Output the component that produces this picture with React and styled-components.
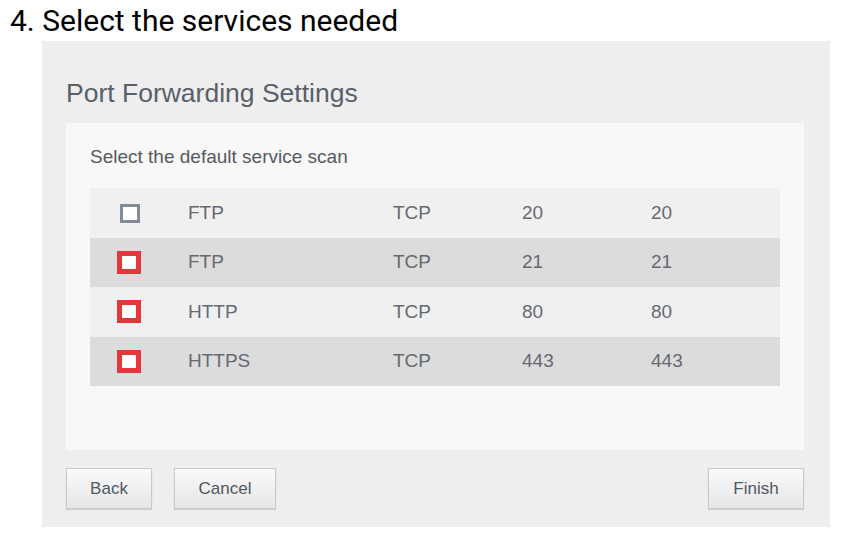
import React from "react";
import styled, { createGlobalStyle } from "styled-components";

const GlobalStyle = createGlobalStyle`
  body {
    margin: 0;
    background: #ffffff;
    font-family: "Liberation Sans", Arial, sans-serif;
  }
`;

const services = [
  { name: "FTP", protocol: "TCP", start: "20", end: "20", checked: false },
  { name: "FTP", protocol: "TCP", start: "21", end: "21", checked: true },
  { name: "HTTP", protocol: "TCP", start: "80", end: "80", checked: true },
  { name: "HTTPS", protocol: "TCP", start: "443", end: "443", checked: true },
];

export default function App() {
  return (
    <>
      <GlobalStyle />
      <Page>
        <StepTitle>4. Select the services needed</StepTitle>
        <Panel>
          <PanelTitle>Port Forwarding Settings</PanelTitle>
          <Card>
            <Hint>Select the default service scan</Hint>
            <Table>
              {services.map((s, i) => (
                <Row key={i} $even={i % 2 === 1}>
                  <CheckCell>
                    <Check $checked={s.checked} />
                  </CheckCell>
                  <Cell>{s.name}</Cell>
                  <Cell>{s.protocol}</Cell>
                  <Cell>{s.start}</Cell>
                  <Cell>{s.end}</Cell>
                </Row>
              ))}
            </Table>
          </Card>
          <Actions>
            <Button $width={86}>Back</Button>
            <Button $width={102}>Cancel</Button>
            <Spacer />
            <Button $width={96}>Finish</Button>
          </Actions>
        </Panel>
      </Page>
    </>
  );
}

const Page = styled.div`
  display: flex;
  flex-direction: column;
  padding: 3px 0 0 0;
`;

const StepTitle = styled.h1`
  margin: 0 0 0 10px;
  font-family: Roboto, "Liberation Sans", sans-serif;
  font-weight: 400;
  font-size: 30px;
  line-height: 36px;
  color: #000;
`;

const Panel = styled.div`
  margin-left: 42px;
  margin-top: 2px;
  width: 788px;
  box-sizing: border-box;
  background: #eeeeee;
  padding: 0 26px 18px 24px;
  display: flex;
  flex-direction: column;
`;

const PanelTitle = styled.h2`
  margin: 0;
  padding: 35px 0 13px;
  font-weight: 400;
  font-size: 26.5px;
  line-height: 34px;
  color: #59606a;
`;

const Card = styled.div`
  background: #f8f8f8;
  padding: 22px 24px 64px;
  display: flex;
  flex-direction: column;
`;

const Hint = styled.div`
  font-size: 19px;
  line-height: 24px;
  color: #555a60;
  margin-bottom: 19px;
`;

const Table = styled.div`
  display: flex;
  flex-direction: column;
`;

const Row = styled.div`
  display: grid;
  grid-template-columns: 98px 205px 129px 129px 1fr;
  align-items: center;
  height: 49.5px;
  background: ${(p) => (p.$even ? "#dcdcdc" : "#f0f0f0")};
`;

const CheckCell = styled.div`
  display: flex;
  padding-left: 27px;
`;

const Check = styled.span`
  box-sizing: border-box;
  display: block;
  background: #fff;
  ${(p) =>
    p.$checked
      ? `width: 24px; height: 23px; border: 5px solid #e3373b;`
      : `width: 20px; height: 19px; border: 3px solid #7f8c99; margin: 2px 0 0 3px;`}
`;

const Cell = styled.div`
  font-size: 19px;
  color: #666a70;
`;

const Actions = styled.div`
  display: flex;
  gap: 22px;
  margin-top: 18px;
`;

const Spacer = styled.div`
  flex: 1;
`;

const Button = styled.button`
  width: ${(p) => p.$width}px;
  height: 41px;
  border: 1px solid #c9c9c9;
  background: linear-gradient(#fafafa, #e6e6e6);
  box-shadow: 0 1px 1px rgba(0, 0, 0, 0.12);
  font-family: "Liberation Sans", Arial, sans-serif;
  font-size: 17px;
  color: #505864;
  padding: 0;
`;
